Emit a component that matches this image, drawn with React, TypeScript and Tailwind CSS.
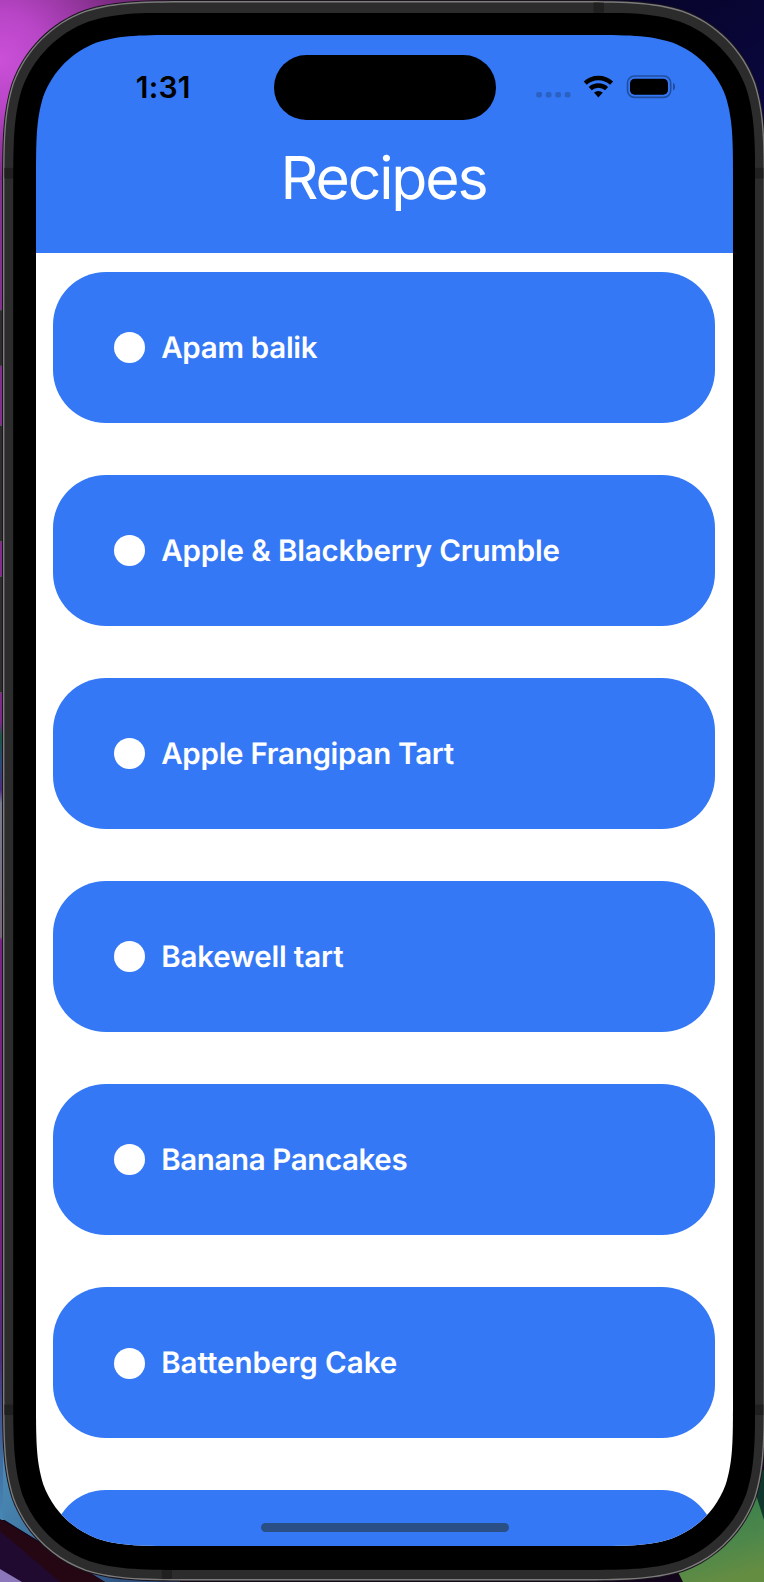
import React from "react";

const recipes = [
  { name: "Apam balik", tracking: "tracking-[-0.28px]" },
  { name: "Apple & Blackberry Crumble", tracking: "tracking-[-0.14px]" },
  { name: "Apple Frangipan Tart", tracking: "tracking-[-0.27px]" },
  { name: "Bakewell tart", tracking: "tracking-[-0.16px]" },
  { name: "Banana Pancakes", tracking: "tracking-[-0.38px]" },
  { name: "Battenberg Cake", tracking: "tracking-[-0.03px]" },
  { name: "", tracking: "" },
];

// Continuous-curvature rounded rectangle, as used for device corners.
function smoothRect(w: number, h: number, r: number) {
  const a = 1.528665 * r;
  const b = 1.088493 * r;
  const c = 0.868407 * r;
  const d = 0.631494 * r;
  const e = 0.074911 * r;
  const f = 0.372824 * r;
  const g = 0.16906 * r;
  return (
    `path("M${a} 0L${w - a} 0C${w - b} 0 ${w - c} 0 ${w - d} ${e}` +
    `C${w - f} ${g} ${w - g} ${f} ${w - e} ${d}C${w} ${c} ${w} ${b} ${w} ${a}` +
    `L${w} ${h - a}C${w} ${h - b} ${w} ${h - c} ${w - e} ${h - d}` +
    `C${w - g} ${h - f} ${w - f} ${h - g} ${w - d} ${h - e}C${w - c} ${h} ${w - b} ${h} ${w - a} ${h}` +
    `L${a} ${h}C${b} ${h} ${c} ${h} ${d} ${h - e}` +
    `C${f} ${h - g} ${g} ${h - f} ${e} ${h - d}C0 ${h - c} 0 ${h - b} 0 ${h - a}` +
    `L0 ${a}C0 ${b} 0 ${c} ${e} ${d}C${g} ${f} ${f} ${g} ${d} ${e}C${c} 0 ${b} 0 ${a} 0Z")`
  );
}

function Wallpaper() {
  return (
    <svg className="absolute inset-0 h-[1582px] w-[764px]" viewBox="0 0 764 1582" aria-hidden="true">
      <defs>
        <radialGradient id="pink" gradientUnits="userSpaceOnUse" cx="0" cy="60" r="240">
          <stop offset="0" stopColor="#ca50d8" />
          <stop offset="0.2" stopColor="#b845c6" />
          <stop offset="0.5" stopColor="#7f2d87" />
          <stop offset="1" stopColor="#431747" />
        </radialGradient>
        <linearGradient id="navy" x1="0" y1="0" x2="1" y2="1">
          <stop offset="0" stopColor="#05031c" />
          <stop offset="1" stopColor="#0b084a" />
        </linearGradient>
        <linearGradient id="edge" gradientUnits="userSpaceOnUse" x1="0" y1="180" x2="0" y2="1520">
          <stop offset="0" stopColor="#85318f" />
          <stop offset="0.38" stopColor="#812b8a" />
          <stop offset="0.405" stopColor="#7a2886" />
          <stop offset="0.415" stopColor="#185744" />
          <stop offset="0.435" stopColor="#294b78" />
          <stop offset="0.455" stopColor="#4c2d80" />
          <stop offset="0.465" stopColor="#777c91" />
          <stop offset="0.565" stopColor="#776779" />
          <stop offset="0.567" stopColor="#7b2487" />
          <stop offset="0.8" stopColor="#74227f" />
          <stop offset="0.88" stopColor="#4c2e7a" />
          <stop offset="0.93" stopColor="#3f5d94" />
          <stop offset="1" stopColor="#4788b4" />
        </linearGradient>
        <linearGradient id="sky" x1="0" y1="0.2" x2="1" y2="0.8">
          <stop offset="0" stopColor="#4b8db8" />
          <stop offset="1" stopColor="#2b4a78" />
        </linearGradient>
        <linearGradient id="leaf" x1="0.2" y1="0" x2="0.5" y2="1">
          <stop offset="0" stopColor="#347c4c" />
          <stop offset="0.6" stopColor="#4c874b" />
          <stop offset="1" stopColor="#658d42" />
        </linearGradient>
      </defs>
      <rect width="764" height="1582" fill="#12051c" />
      <rect width="420" height="200" fill="url(#pink)" />
      <rect x="400" width="364" height="200" fill="url(#navy)" />
      <rect y="180" width="8" height="1340" fill="url(#edge)" />
      <path d="M3 1420V1519L105 1582H180V1420Z" fill="url(#sky)" />
      <path d="M0 1519L105 1582H0Z" fill="#240713" />
      <path d="M0 1531V1582H60Z" fill="#210a30" />
      <path d="M0 1569L22 1582H0Z" fill="#8b77ba" />
      <rect x="720" y="1470" width="44" height="60" fill="#10372c" />
      <path d="M756 1495L764 1520V1582H683L678 1572Z" fill="url(#leaf)" />
      <g fill="#2d2d2d" stroke="#555" strokeWidth="1">
        <rect x="-2" y="310" width="8" height="56" />
        <rect x="-2" y="425.5" width="8" height="116" />
        <rect x="-2" y="576.5" width="8" height="116" />
      </g>
    </svg>
  );
}

function AntennaBands() {
  return (
    <svg className="absolute inset-0 h-[1576.7px] w-[759.2px]" viewBox="4.4 2.4 759.2 1576.7" fill="#202020" aria-hidden="true">
      <rect x="4" y="168.3" width="760" height="10.6" />
      <rect x="4" y="1405" width="760" height="10.4" />
      <rect x="594" y="2" width="10.3" height="14" />
      <rect x="162" y="1566" width="10.3" height="14" />
    </svg>
  );
}

function StatusIcons() {
  return (
    <svg className="h-[31px] w-[144px]" viewBox="536 72 144 31" aria-hidden="true">
      <g fill="#2b61c4">
        <rect x="536.2" y="92" width="5.8" height="5.6" rx="2" />
        <rect x="545.7" y="92" width="5.8" height="5.6" rx="2" />
        <rect x="555.2" y="92" width="5.8" height="5.6" rx="2" />
        <rect x="564.7" y="92" width="5.8" height="5.6" rx="2" />
      </g>
      <g fill="none" stroke="#000" strokeWidth="4.5">
        <path d="M585.2 83.2A19.4 19.4 0 0 1 611.6 83.2" />
        <path d="M590.2 88.6A12.2 12.2 0 0 1 606.6 88.6" />
      </g>
      <path d="M594 92.6A6.8 6.8 0 0 1 602.8 92.6L598.4 97.6Z" fill="#000" />
      <rect x="627.5" y="76" width="43.2" height="21.4" rx="7" fill="none" stroke="#204d9c" strokeWidth="1.6" />
      <rect x="630" y="78.8" width="38" height="15.9" rx="4.6" fill="#000" />
      <path d="M673 82.8C675.8 84 675.8 89.4 673 90.6Z" fill="#204d9c" />
    </svg>
  );
}

function StatusBar() {
  return (
    <div className="grid h-[65px] w-full shrink-0 grid-cols-[238px_222px_1fr] items-center">
      <time className="pb-[1px] pl-[99.8px] text-[30px] font-semibold leading-[30px] tracking-[0.2px] text-black">
        1:31
      </time>
      <div className="h-[65px] rounded-full bg-black" />
      <div className="pl-[40px]">
        <StatusIcons />
      </div>
    </div>
  );
}

function RecipeCard({ name, tracking }: { name: string; tracking: string }) {
  return (
    <li className="flex h-[151.3px] shrink-0 items-center gap-[16.2px] rounded-[53px] bg-[#3478f6] pl-[60.7px]">
      {name && (
        <>
          <span className="mt-[0.4px] size-[31px] shrink-0 rounded-full bg-white" />
          <span
            className={`whitespace-nowrap pt-[2.4px] text-[29.5px] font-semibold leading-none text-white [text-rendering:geometricPrecision] ${tracking}`}
          >
            {name}
          </span>
        </>
      )}
    </li>
  );
}

function Screen() {
  return (
    <main
      className="relative flex h-[1511px] w-[697px] flex-col overflow-hidden"
      style={{ clipPath: smoothRect(697, 1511, 97.5) }}
    >
      <header className="flex h-[218.2px] shrink-0 flex-col items-center bg-[#3478f6] pt-[20px]">
        <StatusBar />
        <h1 className="mt-[29.4px] pr-[2px] text-[59px] font-normal leading-[60px] tracking-[-2.2px] text-white [text-rendering:geometricPrecision]">
          Recipes
        </h1>
      </header>
      <ul className="flex flex-1 flex-col gap-[51.75px] bg-white pl-[17.3px] pr-[17.8px] pt-[18.8px]">
        {recipes.map((recipe, i) => (
          <RecipeCard key={i} {...recipe} />
        ))}
      </ul>
      <div className="absolute inset-x-0 bottom-[14px] flex justify-center pl-px">
        <div className="h-[9px] w-[248px] rounded-full bg-[#2a4f85]" />
      </div>
    </main>
  );
}

export default function App() {
  return (
    <div className="relative h-[1582px] w-[764px] overflow-hidden pl-[2px] font-[Inter,sans-serif]">
      <Wallpaper />
      <div
        className="relative h-[1581.5px] w-[764px] bg-[#1b141d] p-px"
        style={{ clipPath: smoothRect(764, 1581.5, 131) }}
      >
        <div
          className="h-[1579.5px] w-[762px] bg-[#7d7d7d] p-[1.4px]"
          style={{ clipPath: smoothRect(762, 1579.5, 130) }}
        >
          <div
            className="relative h-[1576.7px] w-[759.2px] bg-[#2c2c2c] pl-[8.8px] pt-[10.2px]"
            style={{ clipPath: smoothRect(759.2, 1576.7, 128.6) }}
          >
            <AntennaBands />
            <div
              className="relative h-[1557.4px] w-[742px] bg-black pl-[22.8px] pt-[22.4px]"
              style={{ clipPath: smoothRect(742, 1557.4, 120) }}
            >
              <Screen />
            </div>
          </div>
        </div>
      </div>
    </div>
  );
}
